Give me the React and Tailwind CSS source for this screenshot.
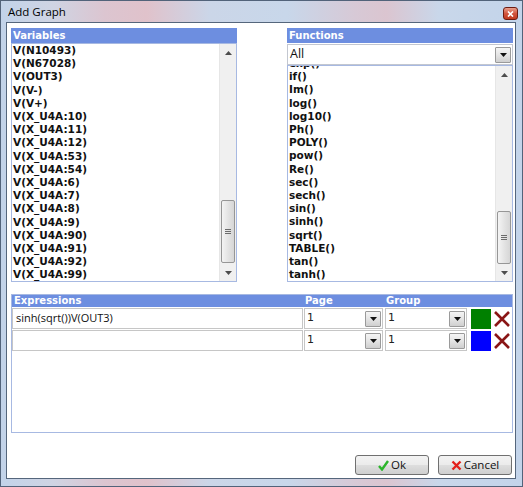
import React from "react";

const variables = [
  "V(N10493)", "V(N67028)", "V(OUT3)", "V(V-)", "V(V+)", "V(X_U4A:10)",
  "V(X_U4A:11)", "V(X_U4A:12)", "V(X_U4A:53)", "V(X_U4A:54)", "V(X_U4A:6)",
  "V(X_U4A:7)", "V(X_U4A:8)", "V(X_U4A:9)", "V(X_U4A:90)", "V(X_U4A:91)",
  "V(X_U4A:92)", "V(X_U4A:99)",
];

const functions = [
  "exp()", "if()", "Im()", "log()", "log10()", "Ph()", "POLY()", "pow()", "Re()",
  "sec()", "sech()", "sin()", "sinh()", "sqrt()", "TABLE()", "tan()", "tanh()",
];

function Arrow({ up }) {
  return (
    <svg width="7" height="4" viewBox="0 0 7 4">
      {up ? (
        <polygon points="0,4 7,4 3.5,0" fill="#4d4d4d" />
      ) : (
        <polygon points="0,0 7,0 3.5,4" fill="#4d4d4d" />
      )}
    </svg>
  );
}

function Scrollbar({ gap, thumb }) {
  return (
    <div className="w-[17px] h-full flex flex-col bg-[#f0f0f0] border-l border-[#e6e6e6]">
      <div className="h-[17px] flex items-center justify-center shrink-0">
        <Arrow up />
      </div>
      <div className="shrink-0" style={{ height: gap }} />
      <div
        className="mx-[1px] shrink-0 rounded-[2px] border border-[#969696] bg-[linear-gradient(90deg,#f4f4f4,#e4e4e4_50%,#d6d6d6)] flex flex-col items-center justify-center gap-[1px]"
        style={{ height: thumb }}
      >
        <div className="w-[6px] h-[1px] bg-[#6b6b6b]" />
        <div className="w-[6px] h-[1px] bg-[#6b6b6b]" />
        <div className="w-[6px] h-[1px] bg-[#6b6b6b]" />
      </div>
      <div className="flex-1" />
      <div className="h-[16px] flex items-center justify-center shrink-0">
        <Arrow />
      </div>
    </div>
  );
}

function DropBtn({ className = "" }) {
  return (
    <div
      className={
        "w-[16px] h-[16px] border border-[#9a9a9a] rounded-[1px] bg-[linear-gradient(180deg,#f5f5f5,#e4e4e4_50%,#cfcfcf)] flex items-center justify-center " +
        className
      }
    >
      <svg width="7" height="4" viewBox="0 0 7 4">
        <polygon points="0,0 7,0 3.5,4" fill="#111" />
      </svg>
    </div>
  );
}

function Select({ width, value }) {
  return (
    <div
      className="h-[21px] border border-[#c6c6c6] bg-white flex items-center justify-between pl-[2px] pr-[1px] shrink-0"
      style={{ width }}
    >
      <span className="font-['DejaVu_Sans',sans-serif] text-[11px] text-[#222]">{value}</span>
      <DropBtn />
    </div>
  );
}

function Cross() {
  return (
    <svg width="18" height="20" viewBox="0 0 18 20">
      <path d="M2 3 L16 17 M16 3 L2 17" stroke="#8a1616" strokeWidth="2.6" strokeLinecap="butt" />
    </svg>
  );
}

function ExprRow({ text, color }) {
  return (
    <div className="flex items-center h-[21px]">
      <div className="w-[291px] h-[21px] border border-[#c6c6c6] flex items-center pl-[3px] font-['Open_Sans',sans-serif] text-[11px] text-[#111] shrink-0">
        {text}
      </div>
      <div className="w-[1px]" />
      <Select width={79} value="1" />
      <div className="w-[2px]" />
      <Select width={82} value="1" />
      <div className="w-[4px]" />
      <div className="w-[20px] h-[20px] shrink-0" style={{ background: color }} />
      <div className="w-[2px]" />
      <Cross />
    </div>
  );
}

function Button({ icon, label }) {
  return (
    <div className="w-[74px] h-[20px] rounded-[3px] border border-[#707070] bg-[linear-gradient(180deg,#f3f3f3_0%,#ebebeb_48%,#dddddd_52%,#cfcfcf_100%)] flex items-center justify-center gap-[2px] font-['Open_Sans',sans-serif] text-[11.5px] text-[#111]">
      {icon}
      <span className="leading-none">{label}</span>
    </div>
  );
}

export default function App() {
  return (
    <div className="w-[523px] h-[487px] border border-[#52637a] flex flex-col bg-[linear-gradient(90deg,#c2d3e9_0%,#cfd4e3_10%,#dcc5d0_20%,#e0c2cb_28%,#cbd6e8_40%,#c8d7ea_55%,#d7c9d6_68%,#dbc5d0_74%,#c9d7ea_84%,#c3d4ea_100%)]">
      <div className="h-[21px] flex items-start justify-between pl-[7px] pr-[4px] shrink-0">
        <span className="font-['Open_Sans',sans-serif] text-[11.5px] text-black mt-[3px] leading-[16px]">
          Add Graph
        </span>
        <div className="mt-[6px] w-[15px] h-[13px] rounded-[3px] border border-[#6d1c12] bg-[linear-gradient(180deg,#e9a08d,#d2553e_50%,#c0391f)] flex items-center justify-center">
          <svg width="7" height="6" viewBox="0 0 7 6">
            <path d="M1 0.5 L6 5.5 M6 0.5 L1 5.5" stroke="#fff" strokeWidth="1.6" />
          </svg>
        </div>
      </div>
      <div className="pl-[5px] pr-[6px]">
        <div className="h-[457px] border border-[#55667c] bg-white flex flex-col pt-[5px] pl-[4px] pr-[2px]">
          <div className="flex gap-[50px] h-[254px] shrink-0">
            <div className="w-[226px] flex flex-col">
              <div className="h-[15px] bg-[#6d8ee0] text-white font-['DejaVu_Sans',sans-serif] font-bold text-[10px] leading-[15px] pl-[2px] shrink-0">
                Variables
              </div>
              <div className="flex-1 border border-[#a7b9e2] flex min-h-0">
                <div className="flex-1 overflow-hidden pl-[1px] font-['DejaVu_Sans',sans-serif] font-bold text-[10.5px] leading-[13.2px] text-[#111]">
                  {variables.map((v) => (
                    <div key={v} className="whitespace-nowrap">{v}</div>
                  ))}
                </div>
                <Scrollbar gap={139} thumb={63} />
              </div>
            </div>
            <div className="w-[226px] flex flex-col">
              <div className="h-[15px] bg-[#6d8ee0] text-white font-['DejaVu_Sans',sans-serif] font-bold text-[10px] leading-[15px] pl-[2px] shrink-0">
                Functions
              </div>
              <div className="mt-[1px] h-[21px] border border-[#c3c7d0] flex items-center justify-between pl-[2px] pr-[1px] shrink-0">
                <span className="font-['Open_Sans',sans-serif] text-[12.5px] text-[#111]">All</span>
                <DropBtn />
              </div>
              <div className="flex-1 border border-[#a7b9e2] flex min-h-0">
                <div className="flex-1 overflow-hidden pl-[1px] font-['DejaVu_Sans',sans-serif] font-bold text-[10.5px] leading-[13.2px] text-[#111]">
                  <div className="-mt-[9px]">
                    {functions.map((f) => (
                      <div key={f} className="whitespace-nowrap">{f}</div>
                    ))}
                  </div>
                </div>
                <Scrollbar gap={128} thumb={53} />
              </div>
            </div>
          </div>

          <div className="mt-[12px] w-[502px] h-[139px] border border-[#a7b9e2] flex flex-col shrink-0">
            <div className="h-[12px] bg-[#6d8ee0] flex text-white font-['DejaVu_Sans',sans-serif] font-bold text-[10px] leading-[12px] shrink-0">
              <div className="w-[292px] pl-[2px]">Expressions</div>
              <div className="w-[81px] pl-[1px]">Page</div>
              <div className="pl-[1px]">Group</div>
            </div>
            <div className="mt-[1px] flex flex-col gap-[1px]">
              <ExprRow text="sinh(sqrt())V(OUT3)" color="#008000" />
              <ExprRow text="" color="#0000ff" />
            </div>
          </div>

          <div className="mt-[22px] flex justify-end gap-[9px] pr-[1px]">
            <Button
              label="Ok"
              icon={
                <svg width="11" height="11" viewBox="0 0 11 11">
                  <path d="M1 6 L4 9.5 L10 1" stroke="#2bb52b" strokeWidth="2.4" fill="none" />
                </svg>
              }
            />
            <Button
              label="Cancel"
              icon={
                <svg width="11" height="11" viewBox="0 0 11 11">
                  <path d="M1.5 1.5 L9.5 9.5 M9.5 1.5 L1.5 9.5" stroke="#e3201b" strokeWidth="2.4" />
                </svg>
              }
            />
          </div>
        </div>
      </div>
    </div>
  );
}
